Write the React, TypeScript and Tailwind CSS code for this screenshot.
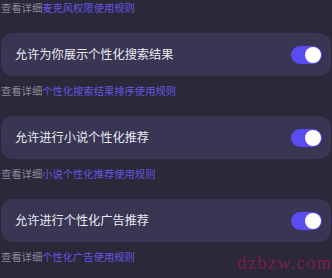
import { useState } from "react";

const sections = [
  { title: "允许为你展示个性化搜索结果", rule: "个性化搜索结果排序使用规则" },
  { title: "允许进行小说个性化推荐", rule: "小说个性化推荐使用规则" },
  { title: "允许进行个性化广告推荐", rule: "个性化广告使用规则" },
];

function RuleLine({ text, className = "" }: { text: string; className?: string }) {
  return (
    <div className={`h-4 pl-px text-[10.3px] leading-4 ${className}`}>
      <span className="text-[#8c8a9b]">查看详细</span>
      <span className="text-[#6657e0]">{text}</span>
    </div>
  );
}

function Toggle({ on, onChange }: { on: boolean; onChange: () => void }) {
  return (
    <button
      onClick={onChange}
      className={`flex h-[18px] w-[31px] items-center rounded-full px-px transition-colors ${
        on ? "justify-end bg-[#5b4cf2]" : "justify-start bg-[#55536a]"
      }`}
    >
      <span className="h-4 w-4 rounded-full bg-white" />
    </button>
  );
}

export default function App() {
  const [flags, setFlags] = useState([true, true, true]);

  return (
    <div
      className="relative h-[278px] w-[332px] overflow-hidden bg-[#2a2839]"
      style={{ fontFamily: '"Noto Sans CJK SC", "Noto Sans", sans-serif' }}
    >
      <RuleLine text="麦克风权限使用规则" />
      {sections.map((s, i) => (
        <div key={s.title}>
          <div className="mx-px mt-[17px] flex h-[43px] items-center justify-between rounded-xl bg-[#383652] pl-[14px] pr-[9px]">
            <span className="text-[12.2px] text-[#ebeaf2]">{s.title}</span>
            <Toggle
              on={flags[i]}
              onChange={() =>
                setFlags((prev) => prev.map((f, j) => (j === i ? !f : f)))
              }
            />
          </div>
          <RuleLine text={s.rule} className="mt-[7px]" />
        </div>
      ))}
      <span
        className="absolute bottom-[1px] right-0 text-[18px] tracking-[1.5px] text-[#7c1f3f]"
        style={{ fontFamily: '"Liberation Serif", serif' }}
      >
        dzbzw.com
      </span>
    </div>
  );
}
